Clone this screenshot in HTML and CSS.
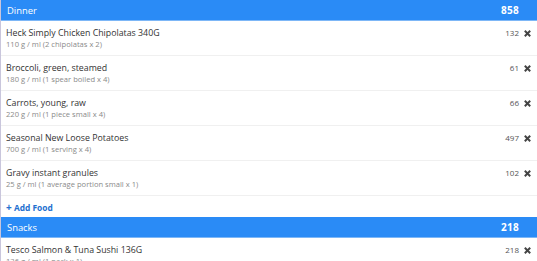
FILE: index.html
```html
<!DOCTYPE html>
<html>
<head>
<meta charset="utf-8">
<link rel="stylesheet" href="styles.css">
</head>
<body>
<div class="diary">
  <div class="meal-head"><span class="meal-name">Dinner</span><span class="meal-total">858</span></div>
  <div class="food">
    <div class="food-info"><div class="food-name">Heck Simply Chicken Chipolatas 340G</div><div class="food-qty">110 g / ml (2 chipolatas x 2)</div></div>
    <div class="food-cal">132</div><svg class="del" viewBox="0 0 10 10"><path d="M2 2L8 8M8 2L2 8"/></svg>
  </div>
  <div class="food">
    <div class="food-info"><div class="food-name">Broccoli, green, steamed</div><div class="food-qty">180 g / ml (1 spear boiled x 4)</div></div>
    <div class="food-cal">61</div><svg class="del" viewBox="0 0 10 10"><path d="M2 2L8 8M8 2L2 8"/></svg>
  </div>
  <div class="food">
    <div class="food-info"><div class="food-name">Carrots, young, raw</div><div class="food-qty">220 g / ml (1 piece small x 4)</div></div>
    <div class="food-cal">66</div><svg class="del" viewBox="0 0 10 10"><path d="M2 2L8 8M8 2L2 8"/></svg>
  </div>
  <div class="food">
    <div class="food-info"><div class="food-name">Seasonal New Loose Potatoes</div><div class="food-qty">700 g / ml (1 serving x 4)</div></div>
    <div class="food-cal">497</div><svg class="del" viewBox="0 0 10 10"><path d="M2 2L8 8M8 2L2 8"/></svg>
  </div>
  <div class="food">
    <div class="food-info"><div class="food-name">Gravy instant granules</div><div class="food-qty">25 g / ml (1 average portion small x 1)</div></div>
    <div class="food-cal">102</div><svg class="del" viewBox="0 0 10 10"><path d="M2 2L8 8M8 2L2 8"/></svg>
  </div>
  <div class="add-row"><span class="add"><span class="plus">+</span> Add Food</span></div>
  <div class="meal-head"><span class="meal-name">Snacks</span><span class="meal-total">218</span></div>
  <div class="food">
    <div class="food-info"><div class="food-name">Tesco Salmon &amp; Tuna Sushi 136G</div><div class="food-qty">136 g / ml (1 pack x 1)</div></div>
    <div class="food-cal">218</div><svg class="del" viewBox="0 0 10 10"><path d="M2 2L8 8M8 2L2 8"/></svg>
  </div>
</div>
</body>
</html>
```
FILE: styles.css
```css
html, body { margin: 0; padding: 0; background: #fff; overflow: hidden; }
body { font-family: "Open Sans", "DejaVu Sans", sans-serif; }
.diary { border-left: 1px solid #c9c6dc; height: 261px; overflow: hidden; }
.meal-head {
  height: 20px;
  background: #2a8bf6;
  border-bottom: 1px solid #7db7f7;
  display: flex;
  align-items: center;
  justify-content: space-between;
  padding: 0 18px 0 6px;
  color: #fff;
}
.meal-name { font-size: 9.4px; }
.meal-total { font-size: 10px; font-weight: 700; letter-spacing: 0.3px; }
.food {
  display: flex;
  align-items: flex-start;
  padding: 6px 5px 6px 5px;
  border-bottom: 1px solid #f0f0f0;
  height: 22px;
}
.food-info { flex: 1; }
.food-name { font-size: 8.8px; color: #333; line-height: 12px; }
.food-qty { font-size: 7.6px; color: #8a8a8a; line-height: 11px; }
.food-cal { font-size: 8px; color: #555; line-height: 12px; margin-right: 4px; }
.del { width: 9px; height: 9px; margin-top: 1.5px; fill: none; stroke: #444; stroke-width: 2.2; }
.add-row { height: 21px; display: flex; align-items: center; padding-left: 5px; }
.add { font-size: 8.4px; font-weight: 700; color: #2470cf; }
.plus { font-size: 10px; }
```
